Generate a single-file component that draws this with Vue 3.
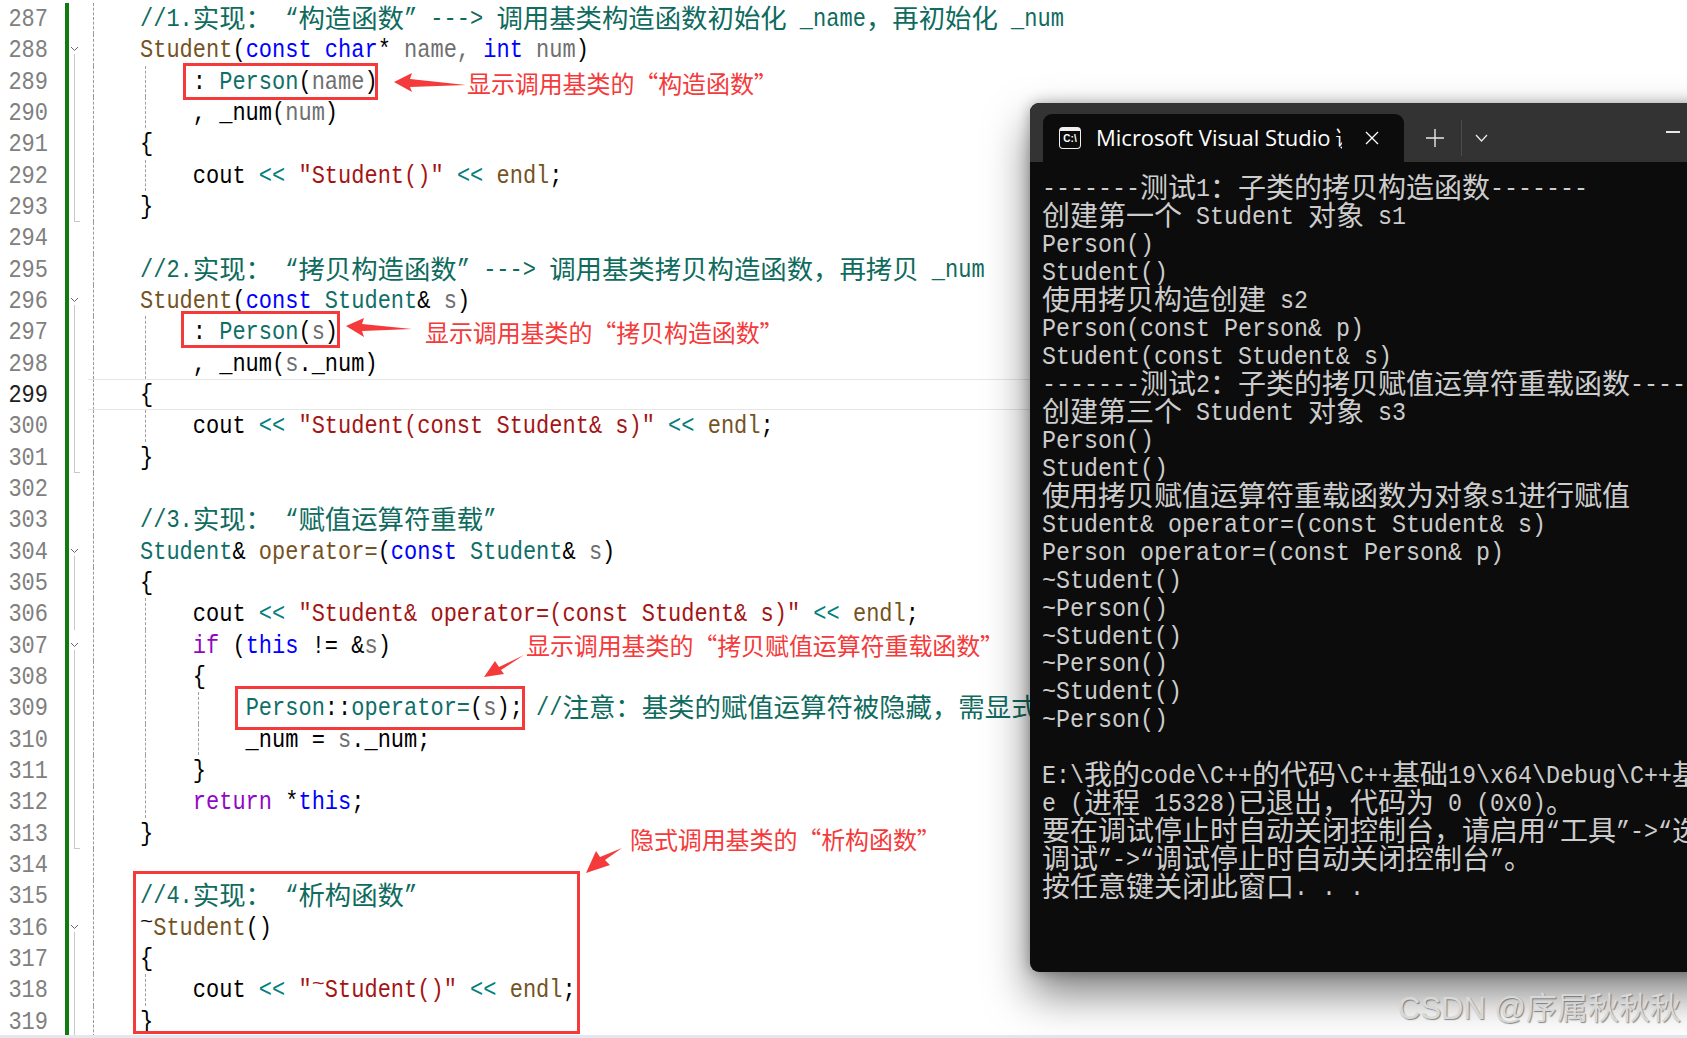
<script setup>
const C = 'cm', K = 'kw', F = 'fn', T = 'ty', P = 'pa', S = 'st', O = 'op', D = 'df', H = 'ti'
const codeLines = {
  287: [['//1.实现： “构造函数” ---> 调用基类构造函数初始化 _name，再初始化 _num', C]],
  288: [['Student', F], ['(', D], ['const char', K], ['* ', D], ['name, ', P], ['int', K], [' ', D], ['num', P], [')', D]],
  289: [['    : ', D], ['Person', T], ['(', D], ['name', P], [')', D]],
  290: [['    , _num', D], ['(', D], ['num', P], [')', D]],
  291: [['{', D]],
  292: [['    cout ', D], ['<<', O], [' ', D], ['"Student()"', S], [' ', D], ['<<', O], [' ', D], ['endl', F], [';', D]],
  293: [['}', D]],
  295: [['//2.实现： “拷贝构造函数” ---> 调用基类拷贝构造函数，再拷贝 _num', C]],
  296: [['Student', F], ['(', D], ['const', K], [' ', D], ['Student', T], ['& ', D], ['s', P], [')', D]],
  297: [['    : ', D], ['Person', T], ['(', D], ['s', P], [')', D]],
  298: [['    , _num', D], ['(', D], ['s', P], ['._num)', D]],
  299: [['{', D]],
  300: [['    cout ', D], ['<<', O], [' ', D], ['"Student(const Student& s)"', S], [' ', D], ['<<', O], [' ', D], ['endl', F], [';', D]],
  301: [['}', D]],
  303: [['//3.实现： “赋值运算符重载”', C]],
  304: [['Student', T], ['& ', D], ['operator=', F], ['(', D], ['const', K], [' ', D], ['Student', T], ['& ', D], ['s', P], [')', D]],
  305: [['{', D]],
  306: [['    cout ', D], ['<<', O], [' ', D], ['"Student& operator=(const Student& s)"', S], [' ', D], ['<<', O], [' ', D], ['endl', F], [';', D]],
  307: [['    ', D], ['if', 'ct'], [' (', D], ['this', K], [' != &', D], ['s', P], [')', D]],
  308: [['    {', D]],
  309: [['        ', D], ['Person', T], ['::', D], ['operator=', T], ['(', D], ['s', P], [');', D], [' ', D], ['//注意：基类的赋值运算符被隐藏，需显式调用', C]],
  310: [['        _num = ', D], ['s', P], ['._num;', D]],
  311: [['    }', D]],
  312: [['    ', D], ['return', 'ct'], [' *', D], ['this', K], [';', D]],
  313: [['}', D]],
  315: [['//4.实现： “析构函数”', C]],
  316: [['~', H], ['Student', F], ['()', D]],
  317: [['{', D]],
  318: [['    cout ', D], ['<<', O], [' ', D], ['"', S], ['~', H + ' st'], ['Student()"', S], [' ', D], ['<<', O], [' ', D], ['endl', F], [';', D]],
  319: [['}', D]]
}
const foldStart = [288, 296, 304, 307, 316]
const foldMid = [289, 290, 291, 292, 297, 298, 299, 300, 305, 306, 308, 309, 310, 311, 312, 317, 318]
const foldEnd = [293, 301, 313, 319]
const guide0 = [289, 290, 292, 297, 298, 300, 306, 307, 308, 309, 310, 311, 312, 318]
const guide1 = [309, 310]

const rows = []
for (let n = 287; n <= 319; n++) {
  rows.push({
    n,
    tokens: codeLines[n] || [],
    fold: foldStart.includes(n) ? 'start' : foldMid.includes(n) ? 'mid' : foldEnd.includes(n) ? 'end' : '',
    g0: guide0.includes(n),
    g1: guide1.includes(n)
  })
}

function parts(text) {
  return text
    .split(/([\u3000-\u303f\u4e00-\u9fff\uff00-\uffef]+)/)
    .filter(Boolean)
    .map(t => ({ t, cjk: /^[\u3000-\u303f\u4e00-\u9fff\uff00-\uffef]/.test(t) }))
}

const termLines = [
  '-------测试1：子类的拷贝构造函数-------',
  '创建第一个 Student 对象 s1',
  'Person()',
  'Student()',
  '使用拷贝构造创建 s2',
  'Person(const Person& p)',
  'Student(const Student& s)',
  '-------测试2：子类的拷贝赋值运算符重载函数-------',
  '创建第三个 Student 对象 s3',
  'Person()',
  'Student()',
  '使用拷贝赋值运算符重载函数为对象s1进行赋值',
  'Student& operator=(const Student& s)',
  'Person operator=(const Person& p)',
  '~Student()',
  '~Person()',
  '~Student()',
  '~Person()',
  '~Student()',
  '~Person()',
  ' ',
  'E:\\我的code\\C++的代码\\C++基础19\\x64\\Debug\\C++基础19.exe',
  'e (进程 15328)已退出，代码为 0 (0x0)。',
  '要在调试停止时自动关闭控制台，请启用“工具”->“选项”->“调试”',
  '调试”->“调试停止时自动关闭控制台”。',
  '按任意键关闭此窗口. . .'
]
</script>

<template>
  <div class="page">
    <div class="editor">
      <div v-for="row in rows" :key="row.n" class="row" :class="{ active: row.n === 299 }">
        <span class="num"><span class="lat">{{ row.n }}</span></span>
        <span class="bar"></span>
        <span class="fold" :class="row.fold">
          <svg v-if="row.fold === 'start'" class="chev" width="9" height="6" viewBox="0 0 9 6">
            <path d="M1 1 L4.5 4.5 L8 1" fill="none" stroke="#666" stroke-width="1" />
          </svg>
        </span>
        <span class="dash"></span>
        <div class="code">
          <i v-if="row.g0" class="guide g0"></i>
          <i v-if="row.g1" class="guide g1"></i>
          <span v-for="(tok, i) in row.tokens" :key="i" :class="tok[1]"><span
            v-for="(p, j) in parts(tok[0])" :key="j" :class="p.cjk ? 'cjk' : 'lat'">{{ p.t }}</span></span>
        </div>
      </div>
      <div class="status"></div>
    </div>

    <div class="box b1"></div>
    <div class="box b2"></div>
    <div class="box b3"></div>
    <div class="box b4"></div>

    <svg class="arrows" width="1030" height="1038" viewBox="0 0 1030 1038">
      <g fill="#f43a3a">
        <polygon points="394,82 412,73 410,79 466,85 410,87 412,92" />
        <polygon points="346,326 364,318 362,324 412,329 362,331 364,337" />
        <polygon points="484,677 504,674 501,670 524,655 499,667 495,661" />
        <polygon points="586,873 610,865 605,860 622,848 600,857 596,851" />
      </g>
    </svg>

    <div class="note n1">显示调用基类的“构造函数”</div>
    <div class="note n2">显示调用基类的“拷贝构造函数”</div>
    <div class="note n3">显示调用基类的“拷贝赋值运算符重载函数”</div>
    <div class="note n4">隐式调用基类的“析构函数”</div>

    <section class="term">
      <header class="titlebar">
        <div class="tab">
          <span class="ticon">C:\</span>
          <span class="ttitle">Microsoft Visual Studio 调试控制台</span>
          <svg class="tclose" width="14" height="14" viewBox="0 0 14 14">
            <path d="M1 1 L13 13 M13 1 L1 13" stroke="#fff" stroke-width="1.3" fill="none" />
          </svg>
        </div>
        <svg class="tplus" width="18" height="18" viewBox="0 0 18 18">
          <path d="M9 0 V18 M0 9 H18" stroke="#e8e8e8" stroke-width="1.4" fill="none" />
        </svg>
        <span class="tsep"></span>
        <svg class="tchev" width="13" height="8" viewBox="0 0 13 8">
          <path d="M1 1 L6.5 7 L12 1" stroke="#e8e8e8" stroke-width="1.3" fill="none" />
        </svg>
        <span class="tmin"></span>
      </header>
      <div class="tbody">
        <div v-for="(line, i) in termLines" :key="i" class="tline"><span
          v-for="(p, j) in parts(line)" :key="j" :class="p.cjk ? 'tcjk' : 'tlat'">{{ p.t }}</span></div>
      </div>
    </section>

    <div class="mark">CSDN @序属秋秋秋</div>
  </div>
</template>

<style>
html, body { margin: 0; background: #fff; overflow: hidden; }
</style>

<style scoped>
.page {
  position: relative;
  width: 1687px;
  height: 1038px;
  overflow: hidden;
  background: #fff;
}
.editor {
  display: flex;
  flex-direction: column;
  height: 1038px;
  padding-top: 3px;
  box-sizing: border-box;
  font-family: "Liberation Mono", monospace;
  font-size: 22px;
  color: #000;
}
.row {
  display: flex;
  flex: none;
  height: 31.34px;
  line-height: 33px;
  white-space: pre;
}
.num {
  width: 40px;
  margin-left: 8px;
  text-align: right;
  color: #808080;
}
.row.active .num { color: #222; }
.bar {
  width: 4px;
  margin-left: 17px;
  background: #107c10;
}
.fold {
  position: relative;
  width: 24px;
}
.fold.start::before,
.fold.mid::before,
.fold.end::before {
  content: "";
  position: absolute;
  left: 5px;
  top: 0;
  bottom: 0;
  border-left: 1px solid #c8c8c8;
}
.fold.start::before { top: 20px; }
.fold.end::after {
  content: "";
  position: absolute;
  left: 5px;
  bottom: 0;
  width: 6px;
  border-top: 1px solid #c8c8c8;
}
.chev {
  position: absolute;
  left: 1px;
  top: 12px;
}
.dash {
  width: 0;
  border-left: 1px dashed #9a9a9a;
}
.code {
  position: relative;
  flex: 1;
  padding-left: 46px;
}
.row.active .code {
  box-shadow: inset 0 1px 0 #e6e6e6, inset 0 -1px 0 #e6e6e6;
  margin-left: -6px;
  padding-left: 52px;
}
.guide {
  position: absolute;
  top: 0;
  bottom: 0;
  border-left: 1px dashed #a0a0a0;
}
.g0 { left: 51px; }
.g1 { left: 104px; }
.lat {
  display: inline-block;
  transform: scaleY(1.16);
}
.ti .lat {
  transform: translateY(-6px) scaleY(0.8);
}
.cjk {
  font-family: "Noto Sans CJK SC", sans-serif;
  font-size: 26.4px;
  line-height: 0;
  vertical-align: -3px;
  font-weight: 400;
}
.cm { color: #0f6b5e; }
.kw { color: #0000ff; }
.fn { color: #74531f; }
.ty { color: #0f6f68; }
.pa { color: #6f6f6f; }
.st { color: #a31515; }
.op { color: #008080; }
.df { color: #000; }
.ct { color: #8f08c4; }
.status {
  position: absolute;
  left: 0;
  right: 0;
  bottom: 0;
  height: 3px;
  background: #e6e7ec;
}

.box {
  position: absolute;
  box-sizing: border-box;
  border: 3px solid #f43a3a;
}
.b1 { left: 183px; top: 63px; width: 195px; height: 37px; }
.b2 { left: 181px; top: 311px; width: 159px; height: 37px; }
.b3 { left: 235px; top: 686px; width: 290px; height: 44px; }
.b4 { left: 133px; top: 871px; width: 447px; height: 163px; }
.arrows {
  position: absolute;
  left: 0;
  top: 0;
}
.note {
  position: absolute;
  font-family: "Noto Sans CJK SC", sans-serif;
  font-size: 24px;
  line-height: 30px;
  letter-spacing: -0.1px;
  color: #f43a3a;
  white-space: nowrap;
}
.n1 { left: 467px; top: 68px; }
.n2 { left: 425px; top: 317px; }
.n3 { left: 526px; top: 630px; }
.n4 { left: 630px; top: 824px; }

.term {
  position: absolute;
  left: 1030px;
  top: 103px;
  width: 760px;
  height: 869px;
  border-radius: 9px 9px 0 9px;
  background: #0c0c0c;
  box-shadow: 0 22px 44px rgba(0, 0, 0, 0.5), 0 0 14px rgba(0, 0, 0, 0.3);
  overflow: hidden;
}
.titlebar {
  display: flex;
  align-items: center;
  box-sizing: border-box;
  height: 59px;
  padding-top: 11px;
  background: #333;
  color: #fff;
  font-family: "Open Sans", sans-serif;
}
.tab {
  display: flex;
  align-items: center;
  align-self: flex-end;
  box-sizing: border-box;
  width: 361px;
  height: 48px;
  margin-left: 13px;
  padding-left: 16px;
  background: #0c0c0c;
  border-radius: 9px 9px 0 0;
}
.ticon {
  display: block;
  flex: none;
  box-sizing: border-box;
  width: 22px;
  height: 22px;
  padding-top: 2px;
  border: 1.5px solid #f0f0f0;
  border-top-width: 4px;
  border-radius: 4px;
  font-family: "Liberation Sans", sans-serif;
  font-size: 10px;
  font-weight: 700;
  line-height: 12px;
  text-align: center;
  overflow: hidden;
}
.ttitle {
  width: 246px;
  margin-left: 15px;
  font-size: 22px;
  font-weight: 500;
  white-space: nowrap;
  overflow: hidden;
}
.tclose { margin-left: 23px; }
.tplus { margin-left: 22px; }
.tsep {
  width: 1px;
  height: 36px;
  margin-left: 17px;
  background: #4c4c4c;
}
.tchev { margin-left: 13px; }
.tmin {
  width: 14px;
  height: 1.5px;
  margin-left: 178px;
  margin-top: -12px;
  background: #e8e8e8;
}
.tbody {
  padding: 11px 0 0 12px;
  color: #cccccc;
  font-family: "Liberation Mono", monospace;
  font-size: 23.33px;
}
.tline {
  height: 27.97px;
  line-height: 32px;
  white-space: pre;
}
.tlat {
  display: inline-block;
  transform: scaleY(1.1);
}
.tcjk {
  font-family: "Noto Sans CJK SC", sans-serif;
  font-size: 28px;
  line-height: 0;
  vertical-align: -3px;
}
.mark {
  position: absolute;
  left: 1398px;
  top: 990px;
  font-family: "Liberation Sans", "Noto Sans CJK SC", sans-serif;
  font-size: 31px;
  line-height: 38px;
  color: #d8d8d8;
  text-shadow: 1px 1px 1px rgba(90, 90, 90, 0.7);
  white-space: nowrap;
}
</style>
